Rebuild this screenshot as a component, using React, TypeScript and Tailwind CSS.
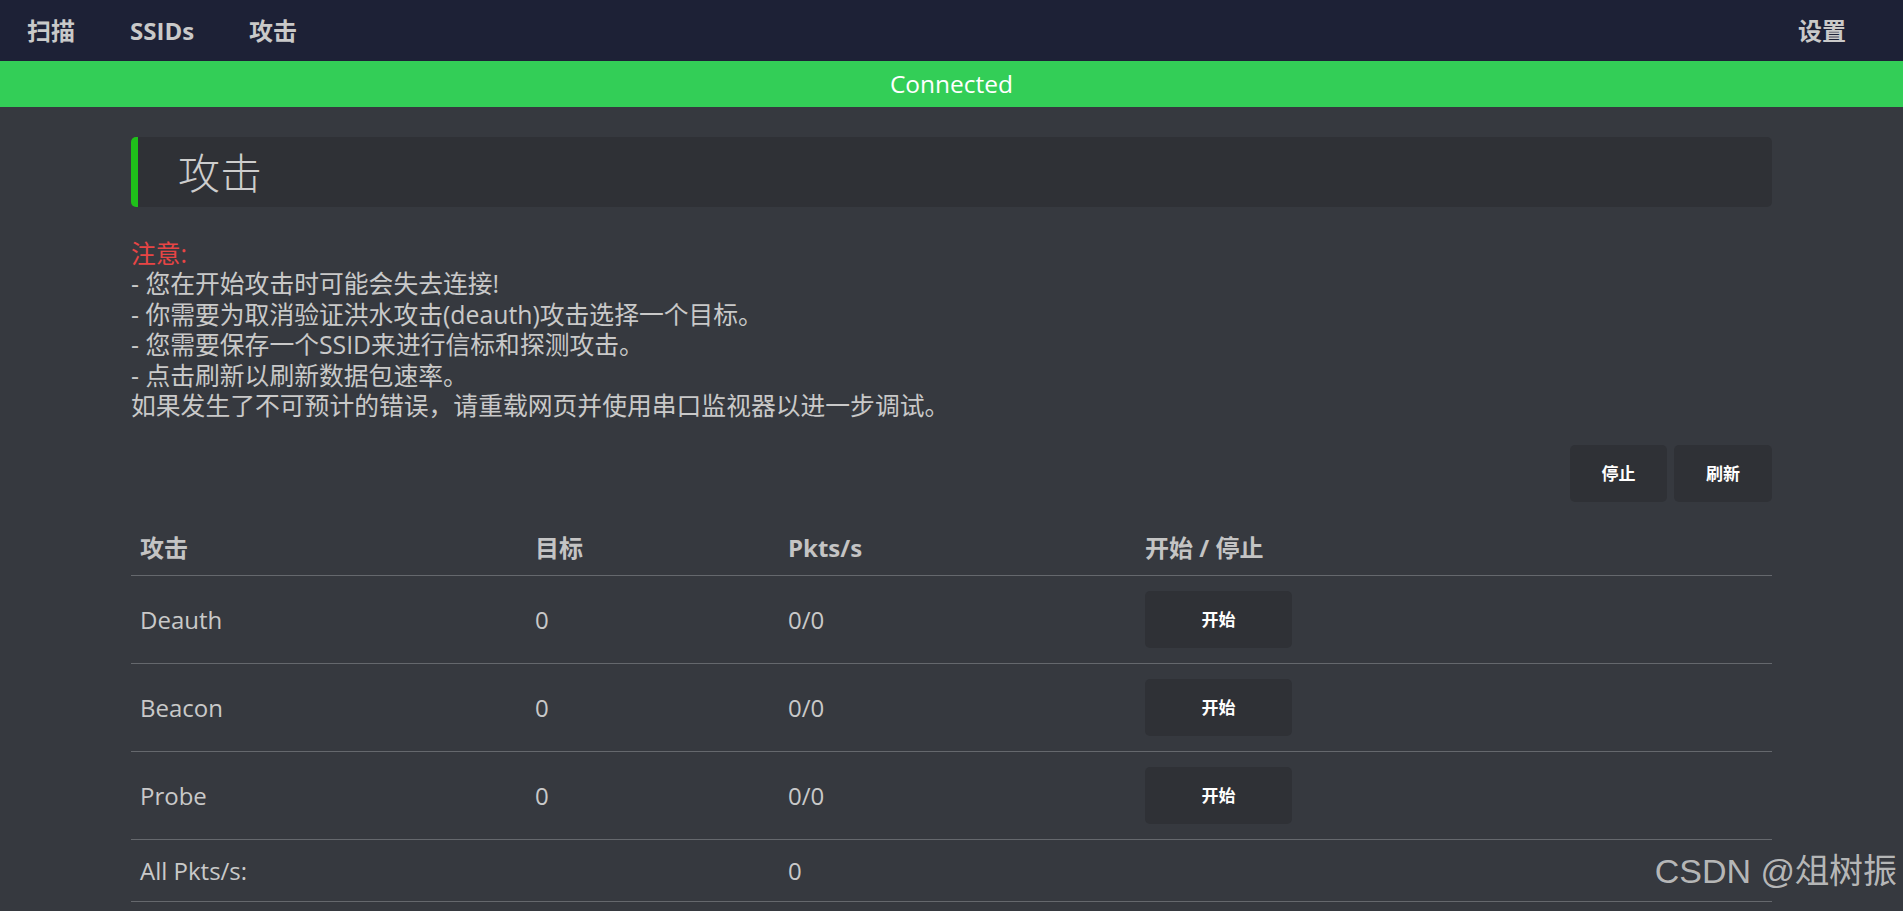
const font = "font-['Open_Sans','Noto_Sans_CJK_SC',sans-serif]";

const rows = [
  { name: "Deauth", targets: "0", pkts: "0/0" },
  { name: "Beacon", targets: "0", pkts: "0/0" },
  { name: "Probe", targets: "0", pkts: "0/0" },
];

const cols = "grid grid-cols-[395px_253px_357px_1fr]";

const Nav = () => (
  <nav className="flex h-[61px] items-center justify-between bg-[#1d2136] text-[24px] font-bold text-[#c9c9c9]">
    <div className="flex">
      <a className="px-[27px]">扫描</a>
      <a className="px-[28px]">SSIDs</a>
      <a className="px-[27px]">攻击</a>
    </div>
    <a className="pr-[57px]">设置</a>
  </nav>
);

const AttackPage = () => (
  <main className="px-[131px] pt-[30px] pb-10">
    <div className="flex h-[70px] items-center rounded-[5px] border-l-[7px] border-[#1fc01a] bg-[#2f3136] pl-[40px]">
      <h1 className="text-[42px] font-light text-[#cdcdcd]">攻击</h1>
    </div>

    <div className="mt-[31px] text-[24.8px] leading-[30.4px] text-[#c9c9c9]">
      <p className="text-[#e84545]">注意:</p>
      <p>- 您在开始攻击时可能会失去连接!</p>
      <p>- 你需要为取消验证洪水攻击(deauth)攻击选择一个目标。</p>
      <p>- 您需要保存一个SSID来进行信标和探测攻击。</p>
      <p>- 点击刷新以刷新数据包速率。</p>
      <p>如果发生了不可预计的错误，请重载网页并使用串口监视器以进一步调试。</p>
    </div>

    <div className="mt-[25px] flex justify-end gap-[7px]">
      <button className="h-[57px] w-[97px] rounded-[5px] bg-[#2f3136] text-[17px] font-bold text-white">
        停止
      </button>
      <button className="h-[57px] w-[98px] rounded-[5px] bg-[#2f3136] text-[17px] font-bold text-white">
        刷新
      </button>
    </div>

    <div className="mt-[19px] text-[24px] text-[#c9c9c9]">
      <div className={`${cols} h-[55px] items-center border-b border-[#65686d] font-bold text-[#c4c4c4]`}>
        <div className="px-[9px]">攻击</div>
        <div className="px-[9px]">目标</div>
        <div className="px-[9px]">Pkts/s</div>
        <div className="px-[9px]">开始 / 停止</div>
      </div>
      {rows.map((r) => (
        <div
          key={r.name}
          className={`${cols} h-[88px] items-center border-b border-[#65686d]`}
        >
          <div className="px-[9px]">{r.name}</div>
          <div className="px-[9px]">{r.targets}</div>
          <div className="px-[9px]">{r.pkts}</div>
          <div className="px-[9px]">
            <button className="h-[57px] w-[147px] rounded-[5px] bg-[#2f3136] text-[17px] font-bold text-white">
              开始
            </button>
          </div>
        </div>
      ))}
      <div className={`${cols} h-[62px] items-center border-b border-[#65686d]`}>
        <div className="px-[9px]">All Pkts/s:</div>
        <div className="px-[9px]"></div>
        <div className="px-[9px]">0</div>
        <div className="px-[9px]"></div>
      </div>
    </div>
  </main>
);

export default function App() {
  return (
    <div className={`relative min-h-screen bg-[#36393f] ${font}`}>
      <Nav />
      <div className="flex h-[46px] items-center justify-center bg-[#33ce57] text-[24.5px] text-white">
        Connected
      </div>
      <AttackPage />
      <div className="pointer-events-none absolute top-[846px] right-[6px] font-['Liberation_Sans','Noto_Sans_CJK_SC',sans-serif] text-[34px] text-[#c8c8c8]/90">
        CSDN @俎树振
      </div>
    </div>
  );
}
